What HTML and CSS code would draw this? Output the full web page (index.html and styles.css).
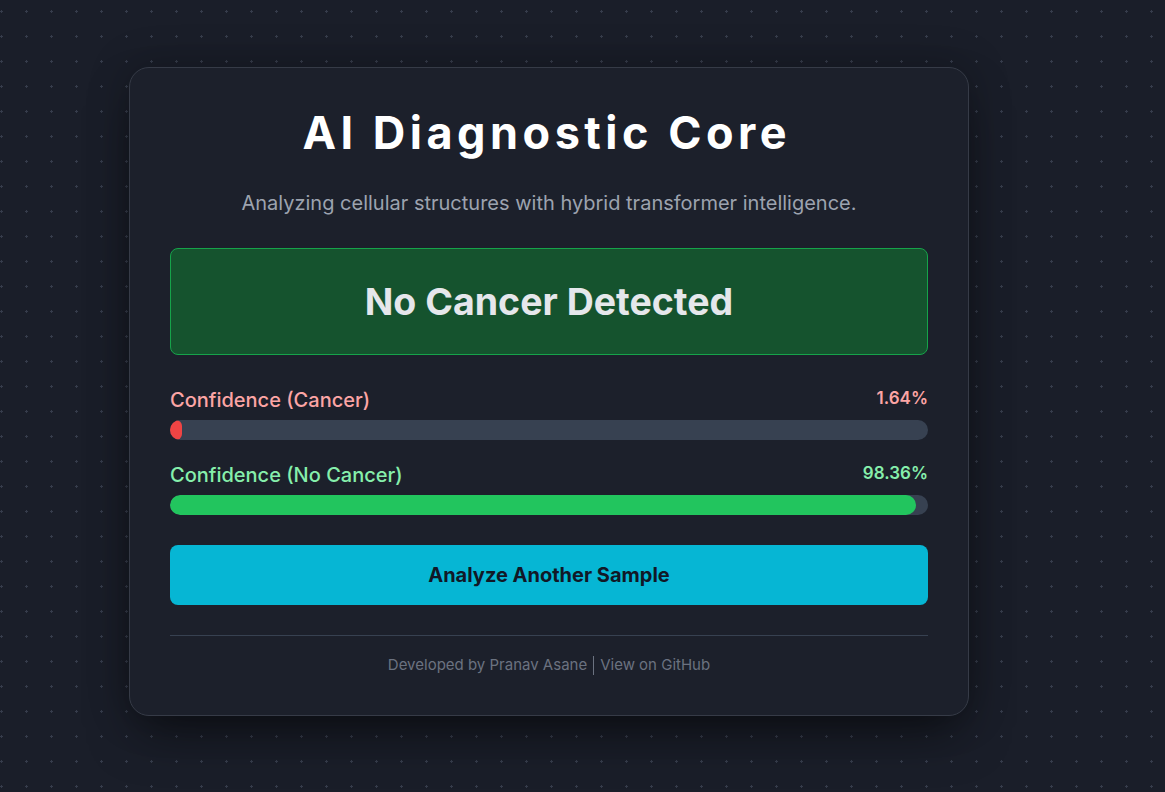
FILE: index.html
```html
<!DOCTYPE html>
<html lang="en">
<head>
<meta charset="utf-8">
<title>AI Diagnostic Core</title>
<link rel="stylesheet" href="styles.css">
</head>
<body>
<div class="page">
  <main class="card">
    <h1 class="title">AI Diagnostic Core</h1>
    <p class="subtitle">Analyzing cellular structures with hybrid transformer intelligence.</p>
    <div class="result">No Cancer Detected</div>
    <div class="metric">
      <div class="metric-head cancer">
        <span class="metric-label">Confidence (Cancer)</span>
        <span class="metric-value">1.64%</span>
      </div>
      <div class="bar"><div class="fill fill-red" style="width:1.64%"></div></div>
    </div>
    <div class="metric metric-second">
      <div class="metric-head healthy">
        <span class="metric-label">Confidence (No Cancer)</span>
        <span class="metric-value">98.36%</span>
      </div>
      <div class="bar"><div class="fill fill-green" style="width:98.36%"></div></div>
    </div>
    <button class="action">Analyze Another Sample</button>
    <footer class="footer">
      <span>Developed by Pranav Asane</span><span class="sep"></span><span>View on GitHub</span>
    </footer>
  </main>
</div>
</body>
</html>
```

FILE: styles.css
```css
* { box-sizing: border-box; }
html, body { margin: 0; padding: 0; }
body {
  min-height: 792px;
  background-color: #1a1e29;
  background-image: url("data:image/svg+xml,%3Csvg xmlns='http://www.w3.org/2000/svg' width='25' height='25'%3E%3Crect x='11' y='12' width='3' height='1' fill='%23363c4b'/%3E%3Crect x='12' y='11' width='1' height='3' fill='%23363c4b'/%3E%3C/svg%3E");
  background-position: 14px 24px;
  font-family: Inter, "Noto Sans", sans-serif;
  color: #e5e7eb;
}
.page {
  padding: 67px 0 0 129px;
}
.card {
  width: 840px;
  background: #1c202b;
  border: 1px solid #363b47;
  border-radius: 20px;
  padding: 40px;
  box-shadow: 0 25px 50px -12px rgba(0,0,0,0.5), 0 0 40px rgba(0,0,0,0.25);
  text-align: center;
}
.title {
  margin: 0;
  font-size: 45px;
  line-height: 50px;
  font-weight: 700;
  letter-spacing: 0.1em;
  padding-right: 0.1em;
  color: #ffffff;
}
.subtitle {
  margin: 31px 0 0;
  font-size: 20px;
  line-height: 28px;
  color: #9ca3af;
}
.result {
  margin-top: 31px;
  height: 107px;
  display: flex;
  align-items: center;
  justify-content: center;
  background: #15532e;
  border: 1px solid #16a34a;
  border-radius: 8px;
  font-size: 37.5px;
  font-weight: 700;
  color: #e5e7eb;
}
.metric { margin-top: 31px; }
.metric-second { margin-top: 21px; }
.metric-head {
  display: flex;
  justify-content: space-between;
  align-items: center;
  height: 28px;
  margin-bottom: 6px;
}
.metric-label { font-size: 20px; font-weight: 500; }
.metric-value { font-size: 17px; font-weight: 600; margin-top: -4px; }
.cancer { color: #fca5a5; }
.healthy { color: #86efac; }
.bar {
  height: 20px;
  background: #374151;
  border-radius: 10px;
  overflow: hidden;
}
.fill { height: 100%; border-radius: 10px; }
.fill-red { background: #ef4444; }
.fill-green { background: #22c55e; }
.action {
  display: block;
  width: 100%;
  margin-top: 30px;
  height: 60px;
  border: none;
  border-radius: 8px;
  background: #06b6d4;
  color: #111827;
  font-family: Inter, "Noto Sans", sans-serif;
  font-size: 20px;
  font-weight: 700;
}
.footer {
  margin-top: 30px;
  border-top: 1px solid #374151;
  padding-top: 19px;
  font-size: 15px;
  line-height: 20px;
  color: #6b7280;
  display: flex;
  justify-content: center;
  align-items: center;
}
.sep {
  display: inline-block;
  width: 1px;
  height: 19px;
  background: #6b7280;
  margin: 0 6px;
}
```
